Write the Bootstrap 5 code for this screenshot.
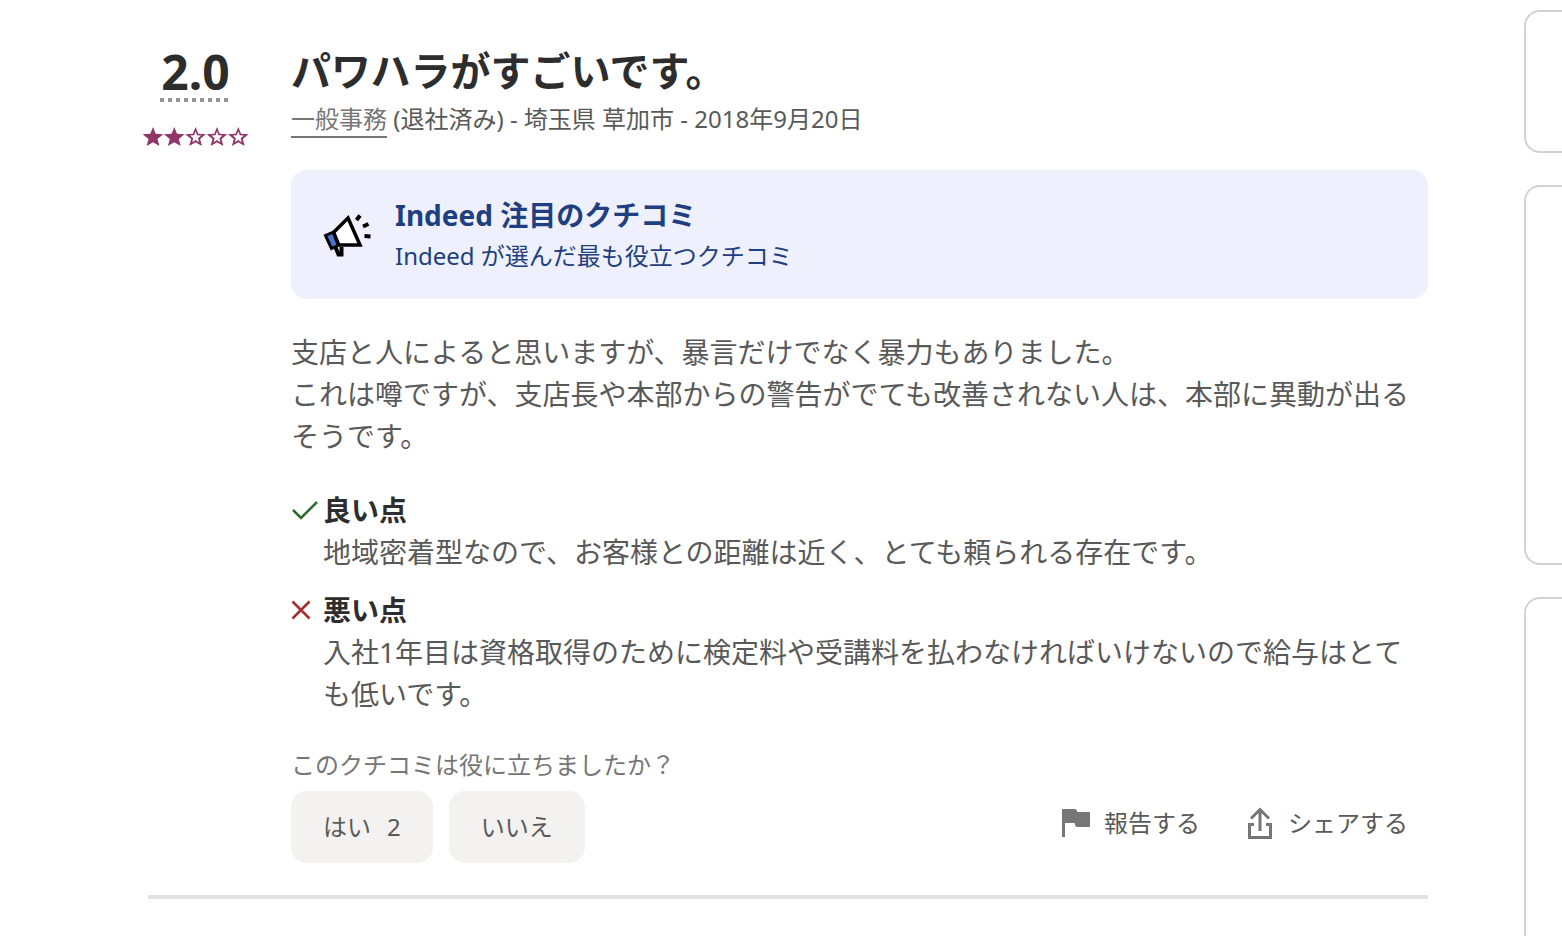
<!DOCTYPE html>
<html lang="ja">
<head>
<meta charset="utf-8">
<meta name="viewport" content="width=device-width, initial-scale=1">
<title>クチコミ</title>
<link href="https://cdn.jsdelivr.net/npm/bootstrap@5.3.0/dist/css/bootstrap.min.css" rel="stylesheet">
<style>
  body { font-family: "Noto Sans", "Noto Sans CJK JP", sans-serif; font-size: 28px; line-height: 42px; color: #595959; background: #fff; }
  .page { gap: 96px; padding-left: 148px; min-height: 100vh; }
  .review { min-width: 0; padding-top: 47px; }
  .review-row { border-bottom: 4px solid #e2e2e2; padding-bottom: 32px; }
  .rating { width: 95px; margin-right: 48px; }
  .score { width: 72px; padding-bottom: 5px; font-size: 48px; line-height: 50px; color: #2d2d2d; background: repeating-linear-gradient(90deg, #949494 0 4px, transparent 4px 8px) bottom / 100% 4px no-repeat; }
  .stars { margin-top: 25px; }
  .review-title { font-size: 40px; line-height: 48px; color: #2d2d2d; margin-bottom: 6px; }
  .meta, .question { font-size: 24px; line-height: 36px; }
  .meta a { color: #767676; border-bottom: 2px solid #767676; text-decoration: none; display: inline-block; line-height: 34px; }
  .notice { margin: 32px 0; padding: 24px 32px; gap: 24px; border-radius: 16px; background: #eef1fd; color: #1f3f80; }
  .notice h3 { font-size: 28px; line-height: 42px; }
  .notice p { font-size: 24px; line-height: 39px; }
  .points { margin-top: 32px; }
  .points h3 { font-size: 28px; line-height: 42px; color: #2d2d2d; }
  .mark-col { width: 32px; }
  .question { margin: 32px 0 8px; color: #767676; }
  .vote { height: 72px; padding: 0 32px; border: 0; border-radius: 16px; background: #f3f2f1; color: #595959; font-size: 24px; line-height: 36px; }
  .vote:hover { background: #e4e2e0; color: #595959; }
  .actions { gap: 44px; }
  .act { font-size: 24px; line-height: 36px; color: #595959; gap: 12px; }
  .side { width: 38px; padding-top: 10px; gap: 32px; }
  .side-card { border: 2px solid #d4d2d0; border-right: 0; border-radius: 16px 0 0 16px; }
  .side-short { height: 143px; }
  .side-mid { height: 380px; }
  .side-last { border-bottom: 0; border-bottom-left-radius: 0; }
</style>
</head>
<body>
<div class="page d-flex">
  <main class="review flex-grow-1">
    <article class="review-row d-flex">
      <div class="rating d-flex flex-column align-items-center flex-shrink-0">
        <div class="score fw-bold text-center">2.0</div>
        <svg class="stars flex-shrink-0" width="106" height="20" viewBox="0 0 106 20" fill="none" role="img" aria-label="5点中2点">
          <defs><path id="star" d="M10 0L12.700 6.700L20.300 7.200L14.500 12L16.400 19L10 15.200L3.600 19L5.500 12L-.3 7.200L7.300 6.700Z"/>
          <path id="star-empty" fill-rule="evenodd" d="M10 0L12.700 6.700L20.300 7.200L14.500 12L16.400 19L10 15.200L3.600 19L5.500 12L-.3 7.200L7.300 6.700ZM10 4.300L8.500 8.300L4.500 8.600L7.600 11.300L6.600 15.200L10 13.100L13.400 15.200L12.400 11.300L15.500 8.600L11.500 8.300Z"/></defs>
          <g fill="#8f3568"><use href="#star"/><use href="#star" x="21.300"/><use href="#star-empty" x="42.600"/><use href="#star-empty" x="64"/><use href="#star-empty" x="85.300"/></g>
        </svg>
      </div>
      <div class="flex-grow-1">
        <h2 class="review-title fw-bold">パワハラがすごいです。</h2>
        <div class="meta"><a href="#">一般事務</a> (退社済み) - 埼玉県 草加市 - 2018年9月20日</div>
        <div class="notice d-flex align-items-center">
          <svg class="flex-shrink-0" width="48" height="48" viewBox="0 0 48 48" aria-hidden="true">
            <path d="M12 35L15.500 43.500H18.500V36" fill="#fff" stroke="#000" stroke-width="4"/>
            <path d="M10 21L25 7L37 34H15Z" fill="#fff"/>
            <path d="M2.500 25L9.500 22L15 34L8.500 37.500Z" fill="#4775d1"/>
            <path d="M25 7L37 34H15.500L10.500 21.500Z" fill="none" stroke="#000" stroke-width="3.500"/>
            <path d="M10.500 21L2.500 24.500L8.500 37.500L16 34Z" fill="none" stroke="#000" stroke-width="3"/>
            <path d="M33.500 9L37 4.500M40 15.500L45.500 13M41.500 25L47.500 25.500" stroke="#000" stroke-width="4"/>
          </svg>
          <div>
            <h3 class="fw-bold mb-0">Indeed 注目のクチコミ</h3>
            <p class="mb-0">Indeed が選んだ最も役立つクチコミ</p>
          </div>
        </div>
        <p class="mb-0">支店と人によると思いますが、暴言だけでなく暴力もありました。<br>これは噂ですが、支店長や本部からの警告がでても改善されない人は、本部に異動が出るそうです。</p>
        <div class="points d-flex flex-column gap-3">
          <section class="d-flex">
            <div class="mark-col flex-shrink-0 d-flex"><svg width="28" height="42" viewBox="0 0 28 42" fill="none" stroke="#2d6a2d" stroke-width="2.500" aria-hidden="true"><path d="M2 21L10 29L26 13"/></svg></div>
            <div><h3 class="fw-bold mb-0">良い点</h3><p class="mb-0">地域密着型なので、お客様との距離は近く、とても頼られる存在です。</p></div>
          </section>
          <section class="d-flex">
            <div class="mark-col flex-shrink-0 d-flex"><svg width="20" height="42" viewBox="0 0 20 42" fill="none" stroke="#a32c2c" stroke-width="2.500" aria-hidden="true"><path d="M1.500 12.500L18.500 29.500M18.500 12.500L1.500 29.500"/></svg></div>
            <div><h3 class="fw-bold mb-0">悪い点</h3><p class="mb-0">入社1年目は資格取得のために検定料や受講料を払わなければいけないので給与はとても低いです。</p></div>
          </section>
        </div>
        <p class="question">このクチコミは役に立ちましたか？</p>
        <div class="d-flex justify-content-between">
          <div class="d-flex gap-3">
            <button type="button" class="btn vote d-flex align-items-center gap-3"><span>はい</span><span>2</span></button>
            <button type="button" class="btn vote">いいえ</button>
          </div>
          <div class="actions d-flex align-items-center pe-3 me-1 pb-2">
            <button type="button" class="btn act border-0 p-0 d-flex align-items-center"><svg width="32" height="32" viewBox="0 0 32 32" fill="#767676" aria-hidden="true"><path d="M2 3Q2 2 3 2H15Q16 2 16.500 3L17.500 5H29Q30 5 30 6V19Q30 20 29 20H17Q16 20 15.500 19L14.500 16H5V30H2Z"/></svg>報告する</button>
            <button type="button" class="btn act border-0 p-0 d-flex align-items-center"><svg width="32" height="32" viewBox="0 0 32 32" fill="none" stroke="#767676" stroke-width="3" aria-hidden="true"><path d="M16 24V2.500M7 11.500L16 2.500L25 11.500M10 17.500H5.500V30.500H26.500V17.500H22"/></svg>シェアする</button>
          </div>
        </div>
      </div>
    </article>
  </main>
  <aside class="side d-flex flex-column flex-shrink-0">
    <div class="side-card side-short"></div>
    <div class="side-card side-mid"></div>
    <div class="side-card side-last flex-grow-1"></div>
  </aside>
</div>
<script src="https://cdn.jsdelivr.net/npm/bootstrap@5.3.0/dist/js/bootstrap.bundle.min.js"></script>
</body>
</html>
